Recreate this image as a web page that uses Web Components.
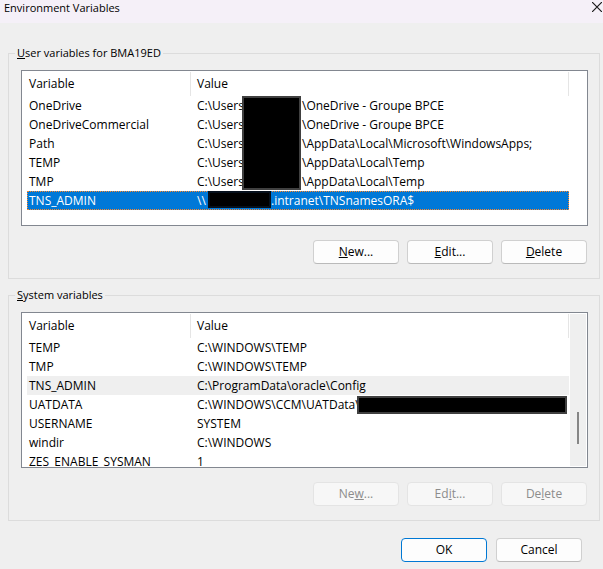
<!DOCTYPE html>
<html lang="en">
<head>
<meta charset="utf-8">
<title>Environment Variables</title>
<style>
  body { margin: 0; background: #efefef; color: #000; font: 12px/16px "Open Sans", "Noto Sans", sans-serif; }
</style>
</head>
<body>
<env-dialog>
  <title-bar slot="title">Environment Variables</title-bar>
  <variable-group label="User variables for BMA19ED" key="0">
    <variable-list source="user">
      <redaction-box style="--x:220px;--y:25px;--w:59px;--h:94px"></redaction-box>
      <redaction-box style="--x:186px;--y:120px;--w:63px;--h:17px;--edge:#06101c"></redaction-box>
    </variable-list>
    <push-button slot="actions" label="New..." key="0"></push-button>
    <push-button slot="actions" label="Edit..." key="0"></push-button>
    <push-button slot="actions" label="Delete" key="0"></push-button>
  </variable-group>
  <variable-group label="System variables" key="0">
    <variable-list source="system" scrollable>
      <redaction-box style="--x:335px;--y:83px;--w:210px;--h:18px"></redaction-box>
    </variable-list>
    <push-button slot="actions" label="New..." key="2" disabled></push-button>
    <push-button slot="actions" label="Edit..." key="2" disabled></push-button>
    <push-button slot="actions" label="Delete" key="2" disabled></push-button>
  </variable-group>
  <push-button slot="footer" label="OK" primary></push-button>
  <push-button slot="footer" label="Cancel"></push-button>
</env-dialog>

<script>
const ROWS = {
  user: [
    ["OneDrive", "C:\\Users\\", "\\OneDrive - Groupe BPCE"],
    ["OneDriveCommercial", "C:\\Users\\", "\\OneDrive - Groupe BPCE"],
    ["Path", "C:\\Users\\", "\\AppData\\Local\\Microsoft\\WindowsApps;"],
    ["TEMP", "C:\\Users\\", "\\AppData\\Local\\Temp"],
    ["TMP", "C:\\Users\\", "\\AppData\\Local\\Temp"],
    ["TNS_ADMIN", "\\\\", ".intranet\\TNSnamesORA$", "selected"]
  ],
  system: [
    ["TEMP", "C:\\WINDOWS\\TEMP"],
    ["TMP", "C:\\WINDOWS\\TEMP"],
    ["TNS_ADMIN", "C:\\ProgramData\\oracle\\Config", "", "inactive"],
    ["UATDATA", "C:\\WINDOWS\\CCM\\UATData\\"],
    ["USERNAME", "SYSTEM"],
    ["windir", "C:\\WINDOWS"],
    ["ZES_ENABLE_SYSMAN", "1"]
  ]
};

function mnemonic(el) {
  const text = el.getAttribute("label");
  if (!el.hasAttribute("key")) return text;
  const i = Number(el.getAttribute("key"));
  return `${text.slice(0, i)}<u>${text[i]}</u>${text.slice(i + 1)}`;
}

customElements.define("env-dialog", class extends HTMLElement {
  constructor() {
    super();
    this.attachShadow({ mode: "open" }).innerHTML = `
      <style>
        :host { display: block; }
        main { display: flex; flex-direction: column; gap: 8px; padding: 22px 3px 0 8px; }
        footer { display: flex; justify-content: flex-end; gap: 9px; padding: 17px 21px 6px 0; }
      </style>
      <slot name="title"></slot>
      <main><slot></slot></main>
      <footer><slot name="footer"></slot></footer>`;
  }
});

customElements.define("title-bar", class extends HTMLElement {
  constructor() {
    super();
    this.attachShadow({ mode: "open" }).innerHTML = `
      <style>
        :host { display: block; background: #f5f0f8; }
        header { display: flex; justify-content: space-between; align-items: flex-start; height: 23px; padding-left: 4px; }
        h1 { font: inherit; font-size: 11px; margin: 0; }
        button { border: 0; background: none; padding: 2px 1px 0 0; display: block; }
        svg { display: block; }
      </style>
      <header><h1><slot></slot></h1>
        <button type="button" aria-label="Close"><svg width="10" height="10" viewBox="0 0 10 10"><path d="M0 0L10 10M10 0L0 10" stroke="#1b1b1b" stroke-width="1.2"/></svg></button>
      </header>`;
  }
});

customElements.define("variable-group", class extends HTMLElement {
  constructor() {
    super();
    this.attachShadow({ mode: "open" }).innerHTML = `
      <style>
        :host { display: block; }
        fieldset { margin: 0; border: 1px solid #dcdcdc; padding: 9px 11px 14px 12px; min-width: 0; }
        legend { margin-left: -6px; padding: 0 2px; font-size: 11px; }
        .actions { display: flex; justify-content: flex-end; gap: 8px; padding: 14px 1px 0 0; }
      </style>
      <fieldset><legend>${mnemonic(this)}</legend>
        <slot></slot>
        <div class="actions"><slot name="actions"></slot></div>
      </fieldset>`;
  }
});

customElements.define("variable-list", class extends HTMLElement {
  constructor() {
    super();
    const rows = ROWS[this.getAttribute("source")].map(([name, head, tail, state]) => `
      <tr class="${state || ""}"><td>${name}</td><td>${tail ? `<span class="head">${head}</span>${tail}` : head}</td></tr>`).join("");
    this.attachShadow({ mode: "open" }).innerHTML = `
      <style>
        :host { display: block; }
        .box { position: relative; box-sizing: border-box; height: 156px; overflow: hidden; background: #fff; border: 1px solid #828790; padding: 0 18px 0 5px; }
        table { width: 100%; table-layout: fixed; border-collapse: collapse; }
        .name { width: 164px; }
        th, td { padding: 0; text-align: left; font-weight: normal; white-space: nowrap; }
        th { padding-top: 1px; }
        th span { display: block; height: 24px; line-height: 24px; border-right: 1px solid #e5e5e5; }
        td { height: 19px; line-height: 19px; }
        th:first-child span, td:first-child { padding-left: 2px; }
        th:last-child span, td:last-child { padding-left: 6px; }
        .head { display: inline-block; width: 105px; }
        .selected { background: #0078d7; color: #fff; outline: 1px dotted #ff8728; outline-offset: -1px; }
        .selected .head { width: 74px; }
        .inactive { background: #efefef; }
        .track { position: absolute; top: 1px; right: 1px; bottom: 1px; width: 16px; background: #efefef; }
        .thumb { position: absolute; top: 98px; left: 7px; width: 2px; height: 32px; background: #868686; }
      </style>
      <div class="box">
        <table>
          <colgroup><col class="name"><col></colgroup>
          <thead><tr><th><span>Variable</span></th><th><span>Value</span></th></tr></thead>
          <tbody>${rows}</tbody>
        </table>
        ${this.hasAttribute("scrollable") ? '<div class="track"><div class="thumb"></div></div>' : ""}
        <slot></slot>
      </div>`;
  }
});

customElements.define("redaction-box", class extends HTMLElement {
  constructor() {
    super();
    this.attachShadow({ mode: "open" }).innerHTML = `
      <style>
        :host { position: absolute; box-sizing: border-box; left: var(--x); top: var(--y); width: var(--w); height: var(--h); background: #000; border: 2px solid var(--edge, #404040); }
      </style>`;
  }
});

customElements.define("push-button", class extends HTMLElement {
  constructor() {
    super();
    this.attachShadow({ mode: "open" }).innerHTML = `
      <style>
        :host { display: block; }
        button { display: block; width: 86px; height: 24px; padding: 0; font: inherit; color: #000; background: #fdfdfd; border: 1px solid #d0d0d0; border-bottom-color: #bababa; border-radius: 4px; }
        button:disabled { color: #8c8c8c; background: #f7f7f7; border-color: #e4e4e4; }
        .primary, .primary:enabled { border-color: #0078d4; }
      </style>
      <button type="button" class="${this.hasAttribute("primary") ? "primary" : ""}" ${this.hasAttribute("disabled") ? "disabled" : ""}>${mnemonic(this)}</button>`;
  }
});
</script>
</body>
</html>
